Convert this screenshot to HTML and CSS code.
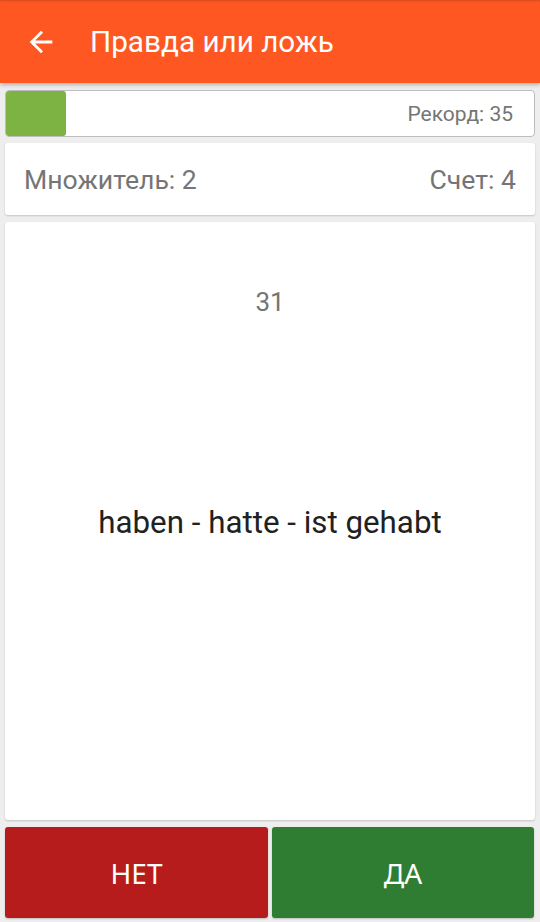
FILE: index.html
```html
<!DOCTYPE html>
<html lang="ru">
<head>
<meta charset="utf-8">
<link rel="stylesheet" href="styles.css">
</head>
<body>
<header class="appbar">
  <svg class="back" width="34" height="34" viewBox="0 0 24 24"><path d="M20 11H7.83l5.59-5.59L12 4l-8 8 8 8 1.41-1.41L7.83 13H20v-2z" fill="#fff"/></svg>
  <h1 class="title">Правда или ложь</h1>
</header>
<main class="content">
  <div class="progress">
    <div class="fill" style="width:60px"></div>
    <span class="record">Рекорд: 35</span>
  </div>
  <div class="card stats">
    <span>Множитель: 2</span>
    <span>Счет: 4</span>
  </div>
  <div class="card question">
    <div class="number">31</div>
    <div class="phrase">haben - hatte - ist gehabt</div>
  </div>
  <div class="buttons">
    <button class="btn no">НЕТ</button>
    <button class="btn yes">ДА</button>
  </div>
</main>
</body>
</html>
```
FILE: styles.css
```css
* { box-sizing: border-box; }
html, body { margin: 0; padding: 0; }
body {
  width: 540px;
  height: 922px;
  background: #eeeeee;
  font-family: Roboto, "Noto Sans", sans-serif;
  overflow: hidden;
}
.appbar {
  height: 83px;
  background: #ff5722;
  display: flex;
  align-items: center;
  padding-left: 24px;
  box-shadow: 0 2px 4px rgba(0,0,0,0.25), inset 0 2px 2px -1px rgba(0,0,0,0.15);
  position: relative;
  z-index: 1;
}
.back { width: 34px; height: 34px; margin-top: 1px; flex: none; }
.title {
  margin: 0 0 0 32px;
  color: #fff;
  font-weight: 400;
  font-size: 29.7px;
}
.content {
  padding: 7px 5px 0 5px;
  display: flex;
  flex-direction: column;
}
.progress {
  height: 47px;
  background: #fff;
  border: 1px solid #bdbdbd;
  border-radius: 4px;
  display: flex;
  align-items: center;
  justify-content: space-between;
  padding-right: 21px;
}
.fill {
  align-self: stretch;
  background: #7cb342;
  border-radius: 3px;
}
.record {
  color: #757575;
  font-size: 21px;
}
.card {
  background: #fff;
  border-radius: 3px;
  box-shadow: 0 1px 2px rgba(0,0,0,0.18);
}
.stats {
  margin-top: 6px;
  height: 72px;
  display: flex;
  justify-content: space-between;
  align-items: center;
  padding: 0 19px;
  color: #757575;
  font-size: 26.6px;
}
.question {
  margin-top: 7px;
  height: 598px;
  position: relative;
  display: flex;
  flex-direction: column;
  align-items: center;
  justify-content: center;
}
.number {
  position: absolute;
  top: 65px;
  left: 0;
  right: 0;
  text-align: center;
  color: #757575;
  font-size: 26px;
}
.phrase {
  color: #212121;
  font-size: 31.3px;
  margin-top: 3px;
}
.buttons {
  margin-top: 7px;
  display: grid;
  grid-template-columns: 263px 262px;
  gap: 4px;
}
.btn {
  height: 91px;
  border: none;
  border-radius: 3px;
  color: #fff;
  font-family: "Noto Sans", "Open Sans", sans-serif;
  font-size: 28px;
  padding: 0;
  box-shadow: 0 1px 2px rgba(0,0,0,0.2);
}
.no { background: #b71c1c; }
.yes { background: #2e7d32; }
```
